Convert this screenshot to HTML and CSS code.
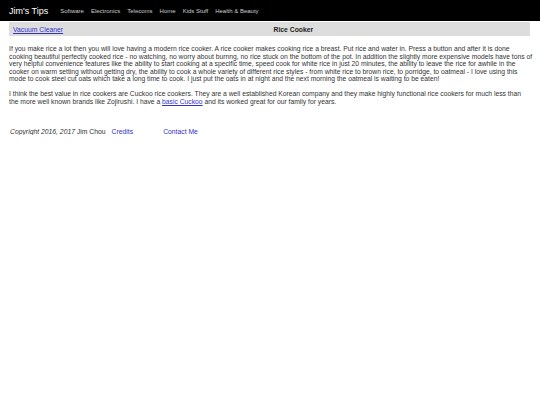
FILE: index.html
```html
<!DOCTYPE html>
<html>
<head>
<meta charset="utf-8">
<link rel="stylesheet" href="styles.css">
</head>
<body>
<header class="topbar">
  <span class="brand">Jim's Tips</span>
  <nav class="nav">
    <a href="#">Software</a>
    <a href="#">Electronics</a>
    <a href="#">Telecoms</a>
    <a href="#">Home</a>
    <a href="#">Kids Stuff</a>
    <a href="#">Health &amp; Beauty</a>
  </nav>
</header>
<div class="tabs">
  <div class="tab"><a href="#">Vacuum Cleaner</a></div>
  <div class="tab current">Rice Cooker</div>
</div>
<main class="content">
  <p>If you make rice a lot then you will love having a modern rice cooker. A rice cooker makes cooking rice a breast. Put rice and water in. Press a button and after it is done cooking beautiful perfectly cooked rice - no watching, no worry about burnng, no rice stuck on the bottom of the pot. In addition the slightly more expensive models have tons of very helpful convenience features like the ability to start cooking at a specific time, speed cook for white rice in just 20 minutes, the ability to leave the rice for awhile in the cooker on warm setting without getting dry, the ability to cook a whole variety of different rice styles - from white rice to brown rice, to porridge, to oatmeal - I love using this mode to cook steel cut oats which take a long time to cook. I just put the oats in at night and the next morning the oatmeal is waiting to be eaten!</p>
  <p class="second">I think the best value in rice cookers are Cuckoo rice cookers. They are a well established Korean company and they make highly functional rice cookers for much less than the more well known brands like Zojirushi. I have a <a href="#">basic Cuckoo</a> and its worked great for our family for years.</p>
</main>
<footer class="footer">
  <span class="copy"><em>Copyright 2016, 2017</em> Jim Chou</span>
  <a href="#" class="credits">Credits</a>
  <a href="#" class="contact">Contact Me</a>
</footer>
</body>
</html>
```
FILE: styles.css
```css
html, body {
  margin: 0;
  padding: 0;
  background: #fff;
  font-family: "Liberation Sans", Arial, sans-serif;
  color: #333;
}
.topbar {
  background: #000;
  height: 21px;
  display: flex;
  align-items: center;
  padding-left: 9px;
}
.brand {
  color: #fff;
  font-size: 9px;
  margin-right: 12px;
}
.nav {
  display: flex;
  gap: 7px;
}
.nav a {
  color: #ccc;
  font-size: 6px;
  text-decoration: none;
}
.tabs {
  display: flex;
  margin: 1px 10px 0 9px;
  background: #ddd;
  height: 14px;
  font-size: 6.8px;
}
.tab {
  flex: 1;
  display: flex;
  align-items: center;
  padding-left: 4px;
}
.tab a {
  color: #33c;
}
.tab.current {
  font-weight: bold;
  color: #222;
}
.content {
  padding: 0 7px 0 9px;
  font-size: 6.75px;
  line-height: 7.6px;
}
.content p {
  margin: 9px 0 0 0;
}
.content p.second {
  margin-top: 7px;
  margin-right: 6px;
}
.content a {
  color: #33c;
}
.footer {
  display: flex;
  align-items: baseline;
  padding-left: 10px;
  margin-top: 23px;
  font-size: 6.8px;
}
.footer a {
  color: #33c;
}
.credits {
  margin-left: 6px;
}
.contact {
  margin-left: 30px;
}
```
